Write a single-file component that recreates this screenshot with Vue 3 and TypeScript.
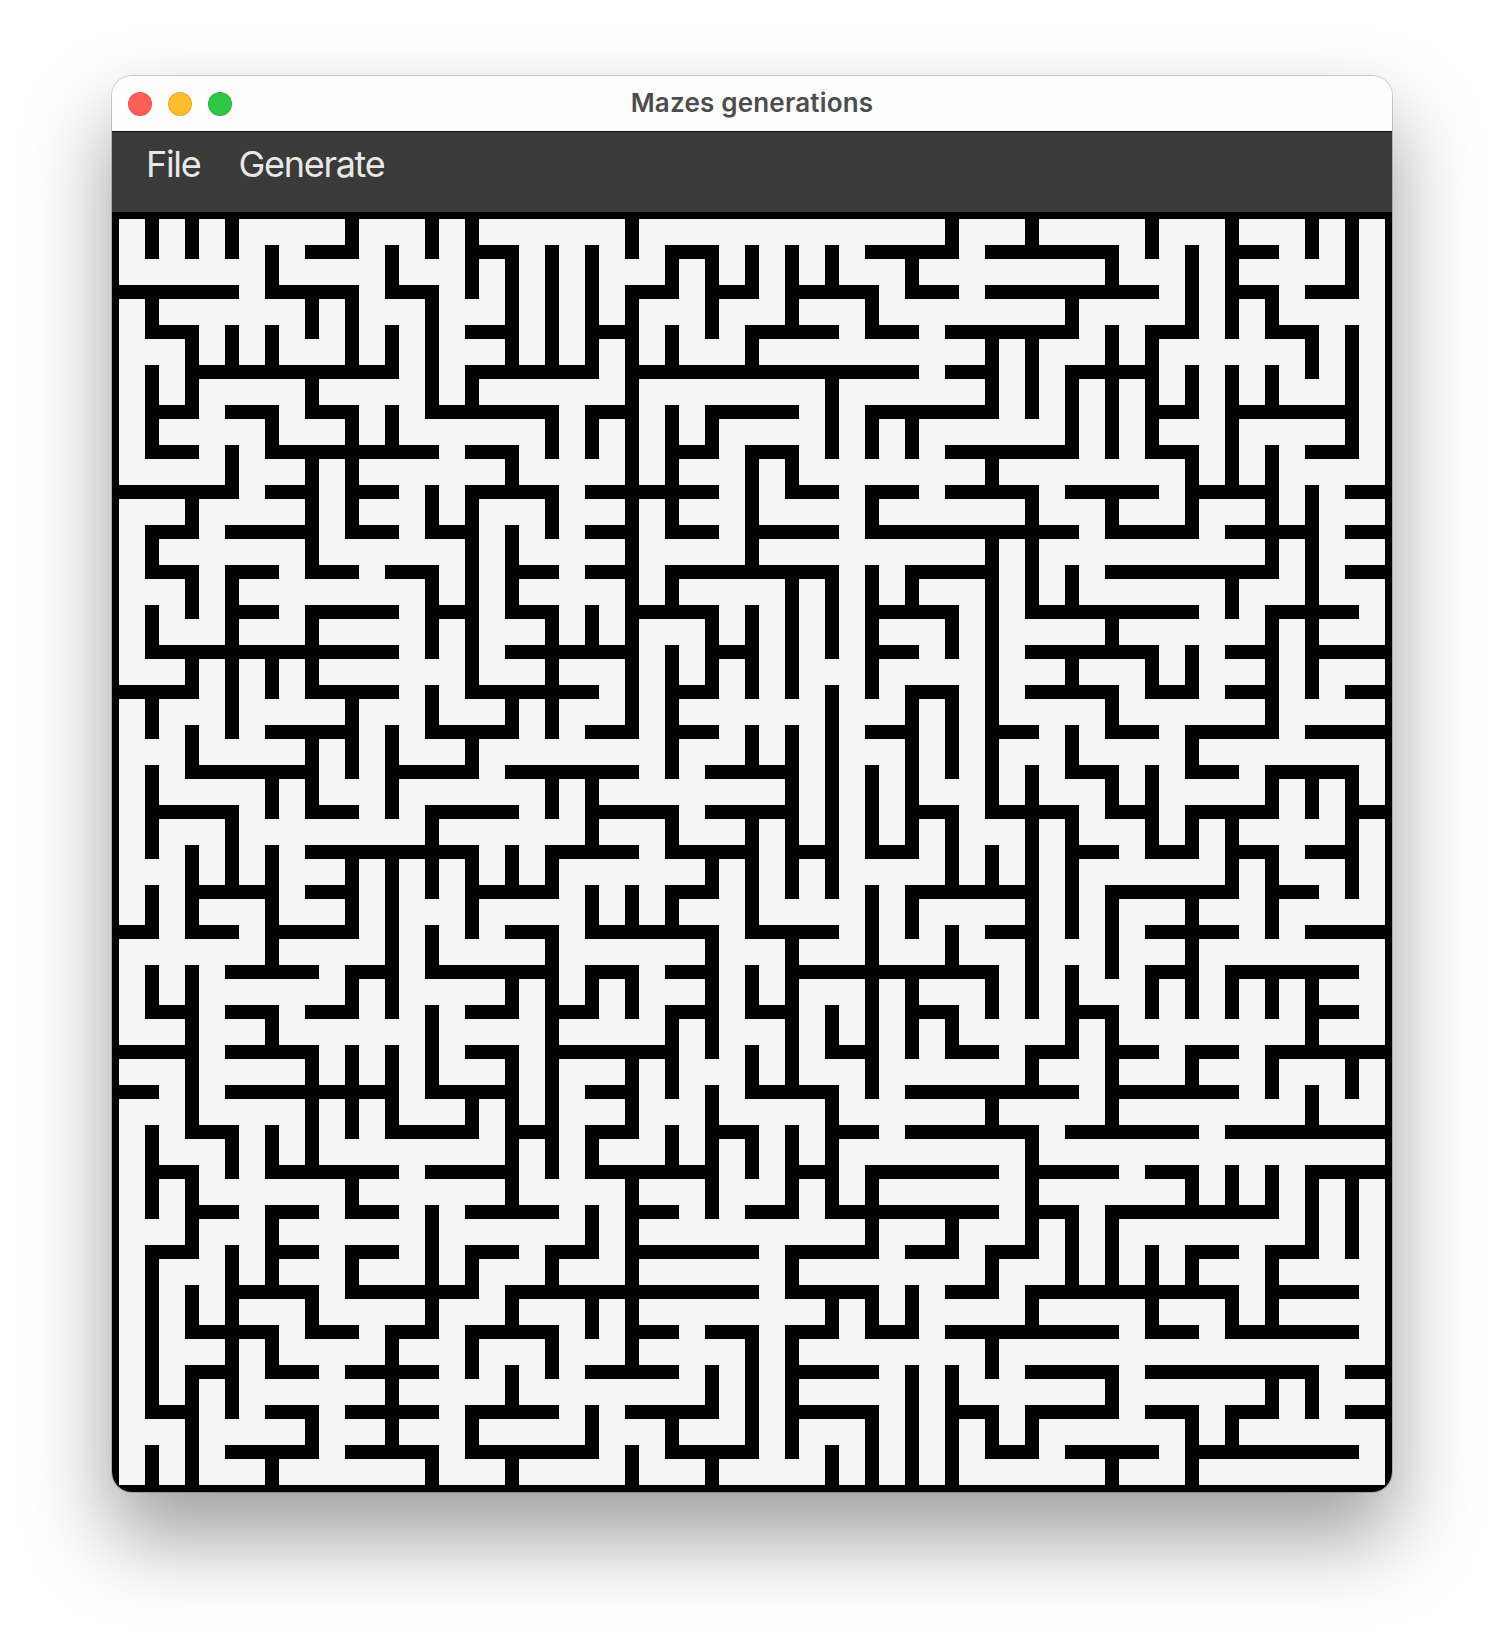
<script setup lang="ts">
type Seg = [number, number];
const CELL = 40;
const N = 32;

const horizontal: Record<number, Seg[]> = {
  0: [[0, 32]],
  1: [[5,6],[9,10],[14,15],[19,21],[22,25],[28,29]],
  2: [[0,3],[4,6],[7,8],[13,14],[15,16],[17,19],[20,21],[22,26],[28,29],[30,31]],
  3: [[1,2],[9,10],[12,13],[16,18],[19,20],[21,24],[26,27],[29,30]],
  4: [[2,7],[9,12],[13,20],[21,22],[24,26]],
  5: [[1,2],[3,4],[5,6],[8,11],[12,13],[15,17],[19,22],[26,27],[28,31]],
  6: [[1,2],[4,8],[9,10],[14,15],[16,17],[21,24],[26,27],[30,31]],
  7: [[0,3],[4,5],[6,7],[9,11],[12,15],[17,18],[19,20],[21,23],[24,26],[27,29],[31,32]],
  8: [[1,2],[3,5],[6,7],[8,9],[12,13],[14,15],[16,18],[19,24],[25,27],[28,30],[31,32]],
  9: [[1,2],[3,4],[5,6],[7,8],[10,11],[12,13],[14,18],[20,22],[25,29],[31,32]],
  10: [[3,4],[5,7],[8,9],[10,11],[13,15],[19,21],[23,27],[29,31]],
  11: [[1,7],[10,13],[15,16],[19,20],[23,26],[28,29],[30,32]],
  12: [[0,2],[5,7],[9,12],[14,15],[20,21],[23,25],[26,27],[28,29],[31,32]],
  13: [[4,6],[8,10],[12,13],[14,15],[19,20],[22,23],[25,26],[27,29],[30,32]],
  14: [[2,5],[7,9],[10,13],[15,17],[24,25],[27,28],[29,31]],
  15: [[1,3],[5,6],[8,10],[12,14],[15,17],[20,21],[22,24],[25,26],[27,29],[31,32]],
  16: [[5,9],[11,13],[14,16],[17,18],[19,20],[24,25],[26,27],[28,29],[30,31]],
  17: [[2,4],[5,6],[9,11],[14,15],[20,23],[25,28],[29,30]],
  18: [[0,1],[2,3],[4,6],[10,11],[12,15],[16,18],[22,23],[26,28],[30,32]],
  19: [[3,5],[6,7],[8,11],[12,13],[14,15],[17,22],[26,27],[28,31]],
  20: [[1,2],[3,4],[5,6],[9,10],[11,12],[14,15],[16,17],[20,21],[24,25],[30,31]],
  21: [[0,2],[3,5],[9,10],[11,14],[18,19],[21,22],[23,24],[25,26],[27,28],[29,32]],
  22: [[0,1],[3,7],[8,10],[12,13],[16,18],[20,24],[25,28]],
  23: [[2,3],[7,9],[10,11],[12,13],[15,16],[18,19],[20,23],[24,27],[28,32]],
  24: [[1,2],[4,7],[8,10],[12,15],[17,18],[19,22],[23,25],[26,27],[30,32]],
  25: [[2,3],[4,5],[6,7],[9,11],[13,14],[16,17],[18,22],[23,24],[25,29]],
  26: [[1,2],[4,5],[6,7],[9,10],[11,12],[13,16],[17,19],[20,21],[22,23],[27,28],[29,30]],
  27: [[3,5],[6,9],[10,16],[17,19],[21,22],[23,28],[29,31]],
  28: [[2,4],[5,6],[7,8],[9,11],[13,14],[15,16],[17,18],[19,20],[21,25],[26,27],[28,31]],
  29: [[2,3],[4,5],[6,8],[12,14],[17,19],[23,25],[26,30],[31,32]],
  30: [[1,2],[4,5],[6,8],[9,11],[13,15],[17,19],[21,22],[23,25],[26,27],[28,29],[31,32]],
  31: [[3,5],[6,8],[9,12],[14,16],[22,23],[24,26],[27,31]],
  32: [[0, 32]],
};

const vertical: Record<number, Seg[]> = {
  0: [[0, 32]],
  1: [[0,1],[2,3],[4,6],[8,9],[10,11],[12,13],[14,16],[17,18],[19,20],[23,25],[26,30],[31,32]],
  2: [[0,1],[3,5],[7,8],[9,10],[11,12],[13,14],[16,18],[19,23],[24,26],[27,28],[29,32]],
  3: [[0,1],[3,4],[6,7],[9,13],[15,17],[23,24],[26,30]],
  4: [[1,2],[3,4],[5,6],[11,12],[14,15],[16,19],[20,21],[23,24],[25,27],[28,29],[31,32]],
  5: [[2,3],[4,5],[6,9],[10,12],[13,15],[21,24],[27,28],[30,31]],
  6: [[0,1],[2,4],[5,8],[12,14],[16,18],[19,20],[21,23],[24,25],[26,27]],
  7: [[1,2],[3,4],[5,6],[13,15],[16,20],[21,23],[28,31]],
  8: [[0,1],[2,5],[7,8],[9,11],[12,13],[15,17],[18,19],[20,22],[25,28],[31,32]],
  9: [[0,2],[4,5],[7,12],[13,14],[16,18],[22,23],[26,27],[28,29],[30,31]],
  10: [[1,4],[6,7],[8,10],[12,13],[16,17],[19,20],[21,25],[27,28],[29,30],[31,32]],
  11: [[1,4],[5,6],[7,8],[10,13],[14,15],[16,17],[18,24],[26,27],[28,29]],
  12: [[1,4],[5,6],[10,11],[14,16],[17,18],[19,20],[23,24],[25,26],[27,28],[30,31]],
  13: [[0,1],[2,13],[17,18],[19,20],[21,23],[24,29],[31,32]],
  14: [[1,2],[3,4],[5,8],[9,10],[11,14],[15,16],[17,18],[20,22],[23,24],[30,31]],
  15: [[1,3],[5,6],[10,12],[16,17],[18,21],[22,25],[29,30],[31,32]],
  16: [[1,2],[3,4],[6,9],[10,12],[13,14],[15,18],[19,20],[21,22],[23,24],[28,31]],
  17: [[1,3],[6,7],[9,12],[13,17],[18,22],[23,25],[26,27],[28,31]],
  18: [[1,2],[4,6],[9,11],[12,17],[20,21],[22,25],[27,28],[31,32]],
  19: [[2,3],[5,6],[7,8],[9,12],[14,16],[17,22],[24,26],[27,28],[30,32]],
  20: [[1,2],[5,6],[9,10],[12,16],[17,18],[19,21],[27,28],[29,32]],
  21: [[0,1],[10,11],[12,14],[15,17],[18,19],[20,21],[25,26],[29,32]],
  22: [[3,5],[6,7],[8,15],[16,17],[19,20],[22,23],[26,27],[28,29],[30,31]],
  23: [[0,1],[3,5],[7,10],[14,20],[21,22],[23,26],[27,28],[30,31]],
  24: [[2,3],[4,6],[9,10],[11,12],[13,14],[15,18],[19,21],[25,27]],
  25: [[1,2],[3,6],[7,8],[10,11],[12,13],[14,15],[17,19],[20,23],[25,27],[29,30],[31,32]],
  26: [[0,1],[3,6],[11,12],[14,16],[19,20],[26,28]],
  27: [[1,3],[4,5],[6,8],[11,12],[13,14],[15,16],[17,20],[21,22],[24,25],[26,27],[30,32]],
  28: [[0,3],[4,7],[9,10],[15,17],[19,20],[24,25],[27,28],[30,31]],
  29: [[2,3],[4,5],[6,9],[10,13],[14,15],[16,18],[19,20],[21,22],[24,25],[26,28],[29,30]],
  30: [[0,1],[3,4],[7,12],[14,15],[19,21],[22,23],[24,26],[29,30]],
  31: [[0,2],[3,6],[14,17],[21,22],[24,26]],
  32: [[0, 32]],
};

const parts: string[] = [];
for (const [y, segs] of Object.entries(horizontal)) {
  for (const [a, b] of segs) parts.push(`M${a * CELL} ${Number(y) * CELL}H${b * CELL}`);
}
for (const [x, segs] of Object.entries(vertical)) {
  for (const [a, b] of segs) parts.push(`M${Number(x) * CELL} ${a * CELL}V${b * CELL}`);
}
const wallPath = parts.join("");
const size = N * CELL;
const menus = ["File", "Generate"];
</script>

<template>
  <div class="page">
    <div class="window">
      <header class="titlebar">
        <div class="lights">
          <span class="light red"></span>
          <span class="light amber"></span>
          <span class="light green"></span>
        </div>
        <h1 class="title">Mazes generations</h1>
      </header>
      <nav class="menubar">
        <span v-for="m in menus" :key="m" class="menu-item">{{ m }}</span>
      </nav>
      <svg class="maze" :width="size" :height="size" :viewBox="`0 0 ${size} ${size}`">
        <rect :width="size" :height="size" fill="#f5f5f5" />
        <path :d="wallPath" fill="none" stroke="#000" stroke-width="14" stroke-linecap="square" />
      </svg>
    </div>
  </div>
</template>

<style>
html, body { margin: 0; background: #fff; }
</style>

<style scoped>
.page {
  width: 1504px;
  height: 1640px;
  box-sizing: border-box;
  padding: 76px 112px 0;
  background: #fff;
  overflow: hidden;
}
.window {
  width: 1280px;
  height: 1416px;
  border-radius: 20px;
  overflow: hidden;
  display: flex;
  flex-direction: column;
  box-shadow: 0 44px 84px 2px rgba(0, 0, 0, 0.38), 0 0 0 1px rgba(0, 0, 0, 0.18);
}
.titlebar {
  position: relative;
  flex: 0 0 56px;
  box-sizing: border-box;
  height: 56px;
  padding-bottom: 2px;
  background: #fdfdfd;
  border-bottom: 1px solid #111;
  display: flex;
  align-items: center;
  justify-content: center;
}
.lights {
  position: absolute;
  left: 16px;
  top: 16px;
  display: flex;
  gap: 16px;
}
.light {
  width: 24px;
  height: 24px;
  box-sizing: border-box;
  border-radius: 50%;
  border: 1px solid rgba(0, 0, 0, 0.1);
}
.red { background: #ff5f57; }
.amber { background: #ffbd2e; }
.green { background: #2fc748; }
.title {
  margin: 0;
  font: 600 26px/1 Inter, "Liberation Sans", sans-serif;
  letter-spacing: 0.2px;
  color: #4d4d4d;
}
.menubar {
  flex: 0 0 80px;
  box-sizing: border-box;
  height: 80px;
  padding: 10px 0 0 34px;
  background: #3a3a3a;
  display: flex;
  gap: 38px;
  align-items: flex-start;
}
.menu-item {
  font: 400 36px/44px Inter, "Liberation Sans", sans-serif;
  letter-spacing: -1.3px;
  color: #e8e8e8;
}
.maze {
  display: block;
  flex: 0 0 auto;
}
</style>
